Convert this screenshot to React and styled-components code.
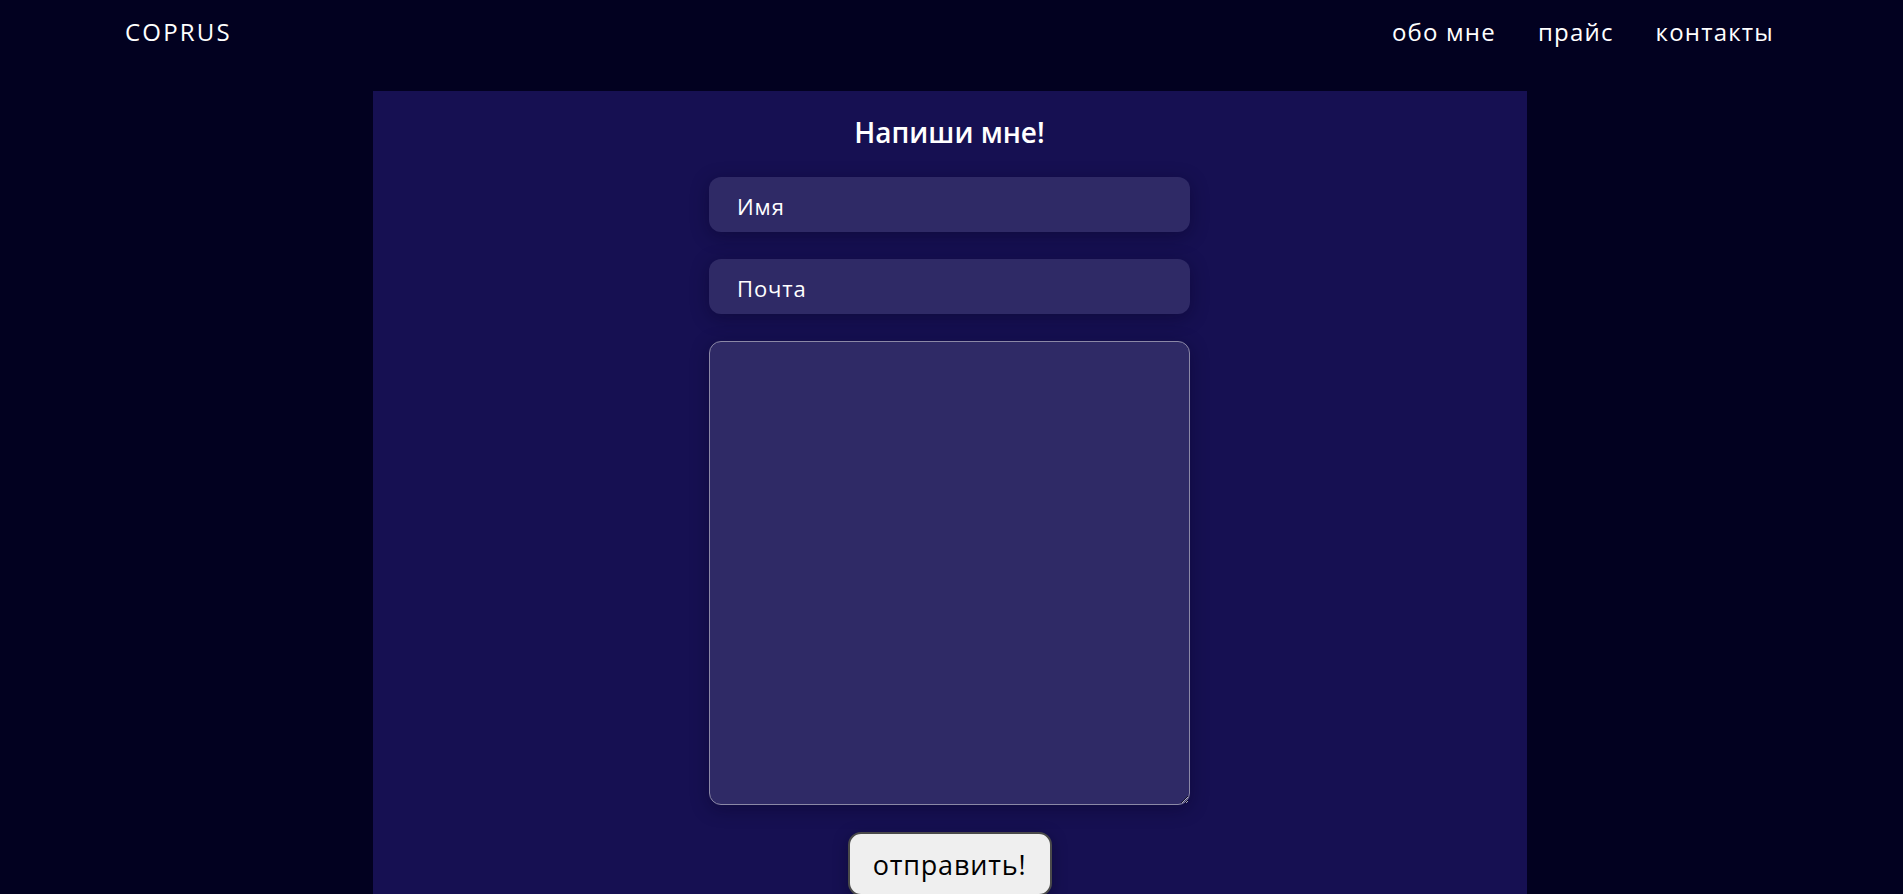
import React from "react";
import styled, { createGlobalStyle } from "styled-components";

const Global = createGlobalStyle`
  html, body { margin: 0; padding: 0; }
  body {
    background: #020120;
    font-family: "Open Sans", "Noto Sans", sans-serif;
    color: #ffffff;
  }
  * { box-sizing: border-box; }
`;

const Header = styled.header`
  height: 63px;
  display: flex;
  align-items: center;
  justify-content: space-between;
  padding: 0 129px 0 125px;
  background: #020120;
`;

const Logo = styled.div`
  font-size: 24px;
  font-weight: 400;
  letter-spacing: 2.2px;
  color: #ffffff;
`;

const Nav = styled.nav`
  display: flex;
  gap: 42px;
`;

const NavLink = styled.a`
  font-size: 24px;
  color: #ffffff;
  text-decoration: none;
  letter-spacing: 1.2px;
`;

const Main = styled.main`
  display: flex;
  justify-content: center;
  padding-top: 28px;
  padding-right: 4px;
`;

const Panel = styled.section`
  width: 1154px;
  background: #161052;
  padding: 24px 0 40px;
  display: flex;
  flex-direction: column;
  align-items: center;
`;

const Title = styled.h2`
  margin: 0 0 28px;
  font-size: 28px;
  font-weight: 600;
  line-height: 34px;
  color: #ffffff;
`;

const Form = styled.form`
  display: flex;
  flex-direction: column;
  align-items: center;
  gap: 27px;
`;

const Field = styled.input`
  width: 481px;
  height: 55px;
  border: none;
  outline: none;
  border-radius: 12px;
  background: #2f2a66;
  padding: 2px 28px 0;
  font-family: inherit;
  font-size: 22px;
  letter-spacing: 0.9px;
  color: #ffffff;
  box-shadow: 0 4px 18px rgba(8, 5, 40, 0.45);
  &::placeholder { color: #ffffff; opacity: 1; }
`;

const Area = styled.textarea`
  width: 481px;
  height: 464px;
  border: 1px solid #8b88a6;
  border-radius: 12px;
  background: #2f2a66;
  padding: 12px 28px;
  font-family: inherit;
  font-size: 22px;
  color: #ffffff;
  outline: none;
  box-shadow: 0 4px 18px rgba(8, 5, 40, 0.45);
`;

const Submit = styled.button`
  width: 204px;
  height: 64px;
  border: 2px solid #4a4a4a;
  border-radius: 13px;
  background: #efefef;
  color: #000000;
  font-family: inherit;
  font-size: 27px;
  letter-spacing: 0.8px;
  cursor: pointer;
  box-shadow: 0 4px 14px rgba(8, 5, 40, 0.5);
`;

export default function App() {
  return (
    <>
      <Global />
      <Header>
        <Logo>COPRUS</Logo>
        <Nav>
          <NavLink href="#">обо мне</NavLink>
          <NavLink href="#">прайс</NavLink>
          <NavLink href="#">контакты</NavLink>
        </Nav>
      </Header>
      <Main>
        <Panel>
          <Title>Напиши мне!</Title>
          <Form onSubmit={(e) => e.preventDefault()}>
            <Field type="text" placeholder="Имя" />
            <Field type="email" placeholder="Почта" />
            <Area />
            <Submit type="submit">отправить!</Submit>
          </Form>
        </Panel>
      </Main>
    </>
  );
}
